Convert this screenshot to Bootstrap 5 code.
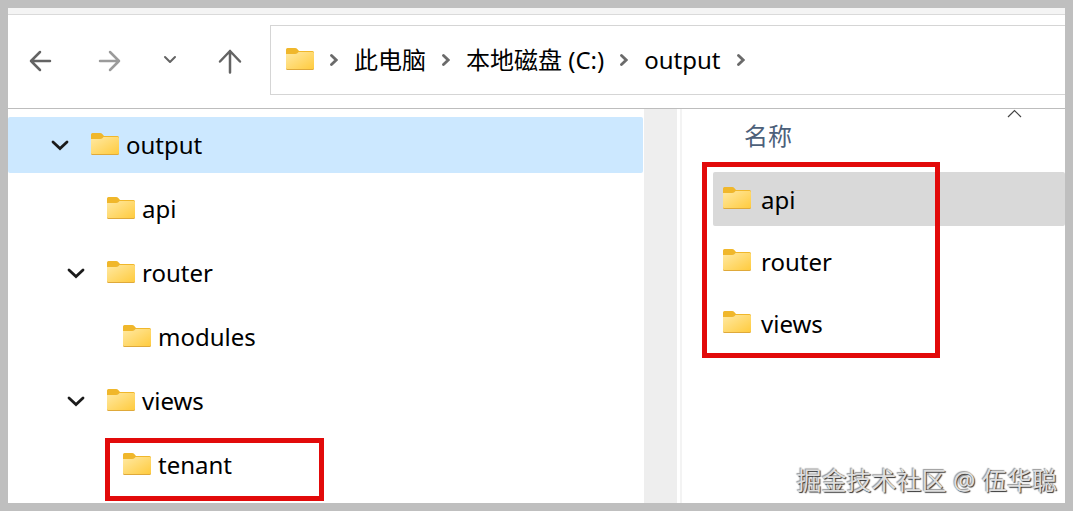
<!DOCTYPE html>
<html lang="zh-CN">
<head>
<meta charset="utf-8">
<meta name="viewport" content="width=device-width, initial-scale=1">
<title>output</title>
<link href="https://cdn.jsdelivr.net/npm/bootstrap@5.3.0/dist/css/bootstrap.min.css" rel="stylesheet">
<style>
  body { font-family: "Noto Sans", "Noto Sans CJK SC", sans-serif; font-size: 24px; line-height: 32px; color: #000; }
  .explorer { border: 8px solid #bfbfbf; }
  .title-strip { height: 7px; background: #f4f4f4; border-bottom: 1px solid #dadada; }
  .toolbar { border-bottom: 1px solid #bdbdbd; padding: 10px 0 13px 20px; }
  .tools { gap: 36px; margin-right: 29px; }
  .tool { width: 24px; height: 24px; color: #646464; }
  .tool:disabled { color: #9b9b9b; }
  .tool-back { margin-right: 9px; }
  .address { height: 70px; gap: 16px; padding-left: 15px; border: 1px solid #d5d5d5; border-right: 0; }
  .address svg { flex: none; }
  .address a, .entry { color: #000; text-decoration: none; }
  .panes { grid-template-columns: minmax(0, 636fr) 33px minmax(0, 388fr); }
  .tree { padding: 8px 1px 0 0; }
  .entry { display: flex; align-items: center; height: 56px; gap: 7px; margin-bottom: 8px; border-radius: 2px; }
  .tree .entry:last-child { margin-bottom: 0; }
  .tree .selected { background: #cce8ff; }
  .depth-0 { padding-left: 43px; }
  .depth-1 { padding-left: 59px; }
  .depth-2 { padding-left: 75px; }
  .twisty { width: 18px; height: 12px; margin-right: 15px; flex: none; }
  .folder { width: 28px; height: 22px; flex: none; margin-bottom: 2px; }
  .track { background: #eee; }
  .files { margin-left: 3px; border-left: 2px solid #f3f3f3; }
  .files-head { margin: 0; padding: 11px 0 20px 62px; color: #4c607a; font-size: 24px; line-height: 32px; font-weight: 400; }
  .sort { top: 0; right: 43px; }
  .file-list { margin-left: 31px; }
  .file-list .entry { height: 54px; padding: 2px 0 0 10px; gap: 10px; }
  .file-list .folder { margin-bottom: 4px; }
  .file-list .selected { background: #d9d9d9; }
  .marked { border: 5px solid #e20a0a; pointer-events: none; }
  .marked-files { inset: -10px auto -8px -11px; width: 238px; }
  .marked-row { left: 97px; top: 1px; width: 219px; height: 63px; }
  .watermark { right: 8px; bottom: 7px; font-size: 25px; color: #dedede; text-shadow: 1px 1px 1px #333, -1px -1px 1px #999; }
</style>
</head>
<body>
<svg class="position-absolute" width="0" height="0" aria-hidden="true">
  <defs>
    <linearGradient id="paper" x1="0" y1="0" x2="1" y2="1">
      <stop offset="0" stop-color="#ffe9a3"/><stop offset="1" stop-color="#ffcb3e"/>
    </linearGradient>
  </defs>
  <symbol id="folder" viewBox="0 0 28 22">
    <path d="M0 1.500Q0 0 1.500 0H9Q10.500 0 11.500 1.200L13 3H26.500Q28 3 28 4.500V8H0Z" fill="#f0b72b"/>
    <path d="M0 6H9Q10.500 6 11.300 5.200L12.500 4H26.800Q28 4 28 5.200V20.500Q28 22 26.500 22H1.500Q0 22 0 20.500Z" fill="#dfa93a"/>
    <path d="M0 6H9Q10.500 6 11.300 5.200L12.500 4H26.800Q28 4 28 5.200V20Q28 21 27 21H1Q0 21 0 20Z" fill="url(#paper)"/>
  </symbol>
  <symbol id="down" viewBox="0 0 18 12"><path d="M2 3L9 9.500L16 3" fill="none" stroke="#1b1b1b" stroke-width="2.800" stroke-linecap="round"/></symbol>
  <symbol id="next" viewBox="0 0 8 14"><path d="M1.500 2.500L6.200 7L1.500 11.500" fill="none" stroke="#6a6a6a" stroke-width="2.800" stroke-linecap="round"/></symbol>
</svg>

<div class="explorer min-vh-100 d-flex flex-column position-relative">
  <div class="title-strip"></div>
  <header class="toolbar d-flex align-items-center">
    <div class="tools d-flex align-items-center">
      <button class="btn p-0 border-0 tool tool-back d-flex" aria-label="后退"><svg width="24" height="24" fill="none" stroke="currentColor" stroke-width="2.500" stroke-linecap="round" stroke-linejoin="round"><path d="M12 4L3 13L12 22M3 13H22"/></svg></button>
      <button class="btn p-0 border-0 opacity-100 tool d-flex" aria-label="前进" disabled><svg width="24" height="24" fill="none" stroke="currentColor" stroke-width="2.500" stroke-linecap="round" stroke-linejoin="round"><path d="M13 4L22 13L13 22M22 13H3"/></svg></button>
      <button class="btn p-0 border-0 tool d-flex" aria-label="最近位置"><svg width="24" height="24" fill="none" stroke="currentColor" stroke-width="2" stroke-linecap="round" stroke-linejoin="round"><path d="M8 9L13 14L18 9"/></svg></button>
      <button class="btn p-0 border-0 tool d-flex" aria-label="上移"><svg width="24" height="26" class="flex-shrink-0" overflow="visible" fill="none" stroke="currentColor" stroke-width="2.500" stroke-linecap="round" stroke-linejoin="round"><path d="M3 13.500L13 3L23 13.500M13 3V24.500"/></svg></button>
    </div>
    <nav class="address flex-grow-1 d-flex align-items-center text-nowrap overflow-hidden" aria-label="路径">
      <svg class="folder"><use href="#folder"/></svg>
      <svg width="8" height="14"><use href="#next"/></svg>
      <a href="#">此电脑</a>
      <svg width="8" height="14"><use href="#next"/></svg>
      <a href="#">本地磁盘 (C:)</a>
      <svg width="8" height="14"><use href="#next"/></svg>
      <a href="#">output</a>
      <svg width="8" height="14"><use href="#next"/></svg>
    </nav>
  </header>

  <main class="panes d-grid flex-grow-1">
    <nav class="tree" aria-label="文件夹">
      <a href="#" class="entry depth-0 selected"><svg class="twisty"><use href="#down"/></svg><svg class="folder"><use href="#folder"/></svg>output</a>
      <a href="#" class="entry depth-1"><span class="twisty"></span><svg class="folder"><use href="#folder"/></svg>api</a>
      <a href="#" class="entry depth-1"><svg class="twisty"><use href="#down"/></svg><svg class="folder"><use href="#folder"/></svg>router</a>
      <a href="#" class="entry depth-2"><span class="twisty"></span><svg class="folder"><use href="#folder"/></svg>modules</a>
      <a href="#" class="entry depth-1"><svg class="twisty"><use href="#down"/></svg><svg class="folder"><use href="#folder"/></svg>views</a>
      <a href="#" class="entry depth-2 position-relative"><span class="twisty"></span><svg class="folder"><use href="#folder"/></svg>tenant<span class="marked marked-row position-absolute"></span></a>
    </nav>
    <div class="track"></div>
    <section class="files position-relative">
      <h2 class="files-head">名称</h2>
      <svg class="sort position-absolute" width="16" height="10" fill="none" stroke="#444" stroke-width="1.200"><path d="M2 8L8.500 1.500L15 8"/></svg>
      <div class="file-list position-relative">
        <a href="#" class="entry selected"><svg class="folder"><use href="#folder"/></svg>api</a>
        <a href="#" class="entry"><svg class="folder"><use href="#folder"/></svg>router</a>
        <a href="#" class="entry"><svg class="folder"><use href="#folder"/></svg>views</a>
        <span class="marked marked-files position-absolute"></span>
      </div>
    </section>
  </main>
  <div class="watermark position-absolute text-nowrap">掘金技术社区 @ 伍华聪</div>
</div>
<script src="https://cdn.jsdelivr.net/npm/bootstrap@5.3.0/dist/js/bootstrap.bundle.min.js"></script>
</body>
</html>
